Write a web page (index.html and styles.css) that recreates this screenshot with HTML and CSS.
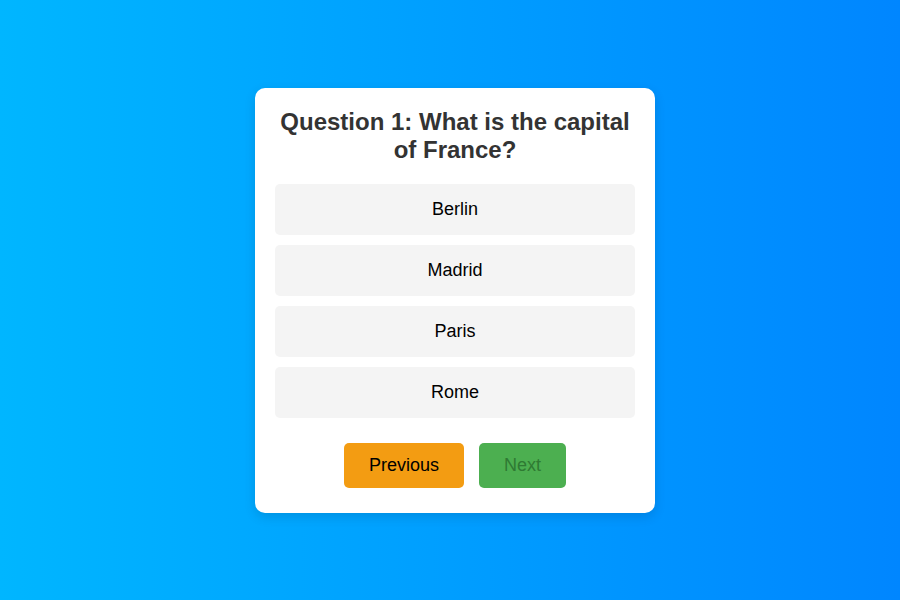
FILE: index.html
```html
<!DOCTYPE html>
<html lang="en">
<head>
<meta charset="utf-8">
<title>Quiz</title>
<link rel="stylesheet" href="styles.css">
</head>
<body>
<div class="quiz">
  <h2 class="question">Question 1: What is the capital of France?</h2>
  <div class="options">
    <button class="option">Berlin</button>
    <button class="option">Madrid</button>
    <button class="option">Paris</button>
    <button class="option">Rome</button>
  </div>
  <div class="nav">
    <button class="btn prev">Previous</button>
    <button class="btn next">Next</button>
  </div>
</div>
</body>
</html>
```
FILE: styles.css
```css
html, body {
  margin: 0;
  height: 100%;
}
body {
  box-sizing: border-box;
  padding-left: 10px;
  font-family: "Liberation Sans", Arial, sans-serif;
  background: linear-gradient(to right, #00b6ff, #0086ff);
  display: flex;
  align-items: center;
  justify-content: center;
}
.quiz {
  width: 360px;
  background: #fff;
  border-radius: 10px;
  padding: 20px 20px 25px;
  box-shadow: 0 4px 12px rgba(0, 0, 0, 0.12);
  text-align: center;
}
.question {
  margin: 0 0 20px;
  font-size: 24px;
  line-height: 28px;
  font-weight: bold;
  color: #333;
}
.options {
  display: flex;
  flex-direction: column;
  gap: 10px;
}
.option {
  display: block;
  width: 100%;
  padding: 15px;
  border: none;
  border-radius: 5px;
  background: #f4f4f4;
  font-family: inherit;
  font-size: 18px;
  color: #000;
}
.nav {
  display: flex;
  justify-content: center;
  gap: 15px;
  margin-top: 25px;
}
.btn {
  padding: 12px 25px;
  border: none;
  border-radius: 5px;
  font-family: inherit;
  font-size: 18px;
}
.prev {
  background: #f39c12;
  color: #000;
}
.next {
  background: #4caf50;
  color: #2f7a33;
}
```
